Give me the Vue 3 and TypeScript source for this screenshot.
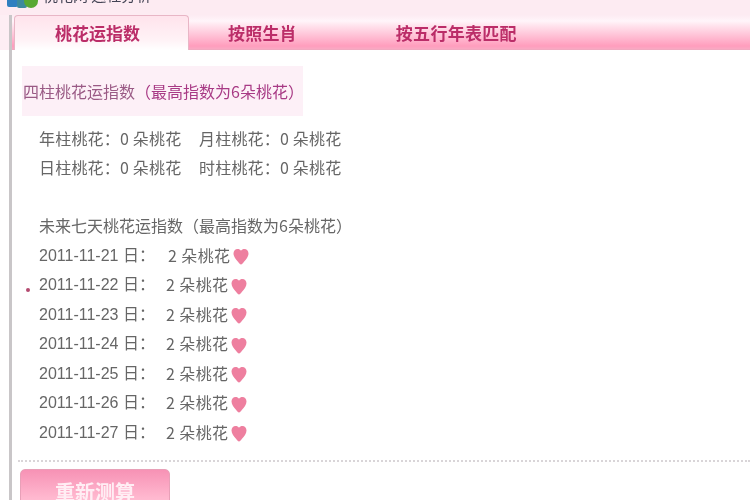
<script setup lang="ts">
const pillars: string[][] = [
  ['年柱桃花：0 朵桃花', '月柱桃花：0 朵桃花'],
  ['日柱桃花：0 朵桃花', '时柱桃花：0 朵桃花'],
]
const days: string[] = ['2011-11-21', '2011-11-22', '2011-11-23', '2011-11-24', '2011-11-25', '2011-11-26', '2011-11-27']
const tabs = [
  { label: '桃花运指数', cls: 'tab active' },
  { label: '按照生肖', cls: 'tab second' },
  { label: '按五行年表匹配', cls: 'tab third' },
]
</script>

<template>
  <div class="page">
    <header class="top">
      <svg class="logo" width="38" height="9" viewBox="0 0 38 9">
        <rect x="7" y="-4" width="11" height="11" rx="2" fill="#2f7fc0" />
        <rect x="17" y="-4" width="10" height="12" rx="2" fill="#3d8a9c" />
        <circle cx="31" cy="1" r="7" fill="#58a832" />
      </svg>
      <span class="brand">桃花网 运程分析</span>
    </header>
    <nav class="tabs">
      <div v-for="t in tabs" :key="t.label" :class="t.cls">{{ t.label }}</div>
    </nav>
    <main class="body">
      <h2 class="head"><span class="head-muted">四柱桃花运指数</span>（最高指数为6朵桃花）</h2>
      <div class="pillars">
        <div v-for="(row, i) in pillars" :key="i" class="pillar-row">
          <span v-for="c in row" :key="c" class="pillar">{{ c }}</span>
        </div>
      </div>
      <div class="week">
        <div class="line">未来七天桃花运指数（最高指数为6朵桃花）</div>
        <div v-for="(d, i) in days" :key="d" class="line day" :class="{ first: i === 0 }">
          <i v-if="i === 1" class="dot"></i>
          <span class="date">{{ d }} 日：</span>
          <span class="count">2 朵桃花</span>
          <svg class="heart" width="16" height="17" viewBox="0 0 16 17">
            <path d="M8 16.500C7 16.500 6.500 15.500 5 13.800 3 11.500.5 8.500.5 5.500.5 2.800 2.300 1 4.600 1 6 1 7.300 1.600 8 2.800 8.700 1.600 10 1 11.400 1c2.300 0 4.100 1.800 4.100 4.500 0 3-2.500 6-4.500 8.300C9.500 15.500 9 16.500 8 16.500z" fill="#ee7f9f" />
          </svg>
        </div>
      </div>
      <div class="rule"></div>
      <button class="again" type="button">重新测算</button>
    </main>
  </div>
</template>

<style>
html, body { margin: 0; background: #fff; }
</style>

<style scoped>
.page {
  width: 750px;
  height: 500px;
  overflow: hidden;
  background: #fff;
  font-family: "Noto Sans CJK SC", "Liberation Sans", sans-serif;
}
.top {
  height: 15px;
  background: #fdebf2;
  display: flex;
  align-items: flex-start;
  gap: 5px;
  overflow: hidden;
}
.logo { flex: none; }
.brand {
  font-size: 15px;
  line-height: 15px;
  margin-top: -13px;
  color: #445;
  filter: blur(0.6px);
}
.tabs {
  height: 35px;
  display: flex;
  align-items: stretch;
  padding-left: 2px;
  margin-left: 0;
  background:
    linear-gradient(#c9c6c8, #c9c6c8) 9px 0 / 3px 100% no-repeat,
    linear-gradient(#fdeef4, #fdeef4) 0 0 / 9px 100% no-repeat,
    linear-gradient(#fdebf2 0, #fff5fa 6px, #ffe6ef 10px, #ff9dbd 31px, #f9a9c3 34px, #e9a8bd 35px);
}
.tab {
  font-size: 17px;
  font-weight: 700;
  line-height: 36px;
  color: #bb2d68;
  filter: blur(0.7px);
}
.active {
  width: 175px;
  margin-left: 12px;
  box-sizing: border-box;
  padding-left: 40px;
  border: 1px solid #e8b6c6;
  border-bottom: 0;
  border-radius: 4px 4px 0 0;
  background: linear-gradient(#ffe3ec, #fff2f6 70%, #fff);
  line-height: 34px;
}
.second { margin-left: 39px; letter-spacing: 0.2px; }
.third { margin-left: 99px; letter-spacing: 0.3px; }
.body {
  height: 450px;
  box-sizing: border-box;
  margin-left: 9px;
  border-left: 3px solid #c9c6c8;
  padding: 16px 0 0 7px;
  position: relative;
}
.head {
  width: 281px;
  height: 50px;
  margin: 0 0 8px 3px;
  background: #fdf0f7;
  font-size: 16px;
  font-weight: 400;
  line-height: 50px;
  color: #a83a85;
  white-space: nowrap;
  box-sizing: border-box;
  padding-left: 1px;
  filter: blur(0.5px);
}
.head-muted { color: #9a5a85; }
.pillars, .week {
  padding-left: 20px;
  color: #666;
  font-size: 16px;
  filter: blur(0.6px);
}
.pillar-row { height: 29px; line-height: 29px; }
.pillar { display: inline-block; width: 160px; white-space: nowrap; letter-spacing: 0.2px; }
.week { margin-top: 29px; }
.line {
  height: 29.5px;
  line-height: 29.5px;
  white-space: nowrap;
}
.day { display: flex; align-items: center; position: relative; }
.date { width: 127px; font-family: "Liberation Sans", "Noto Sans CJK SC", sans-serif; }
.count { letter-spacing: 0.4px; }
.first .count { margin-left: 2px; }
.heart { margin-left: 3px; margin-top: 3px; }
.dot {
  position: absolute;
  left: -13px;
  top: 18px;
  width: 4px;
  height: 4px;
  border-radius: 50%;
  background: #b44a70;
}
.rule {
  margin: 13px 0 0 -1px;
  border-top: 2px dotted #d9d5d8;
}
.again {
  display: block;
  width: 150px;
  height: 48px;
  margin: 7px 0 0 1px;
  padding: 0 0 4px;
  border: 1px solid #e8a0b8;
  border-radius: 5px;
  background: linear-gradient(#f792b5, #ffb8cf 60%, #ffc8da);
  color: #ffeef4;
  font-family: inherit;
  font-size: 20px;
  font-weight: 700;
  filter: blur(0.7px);
}
</style>
